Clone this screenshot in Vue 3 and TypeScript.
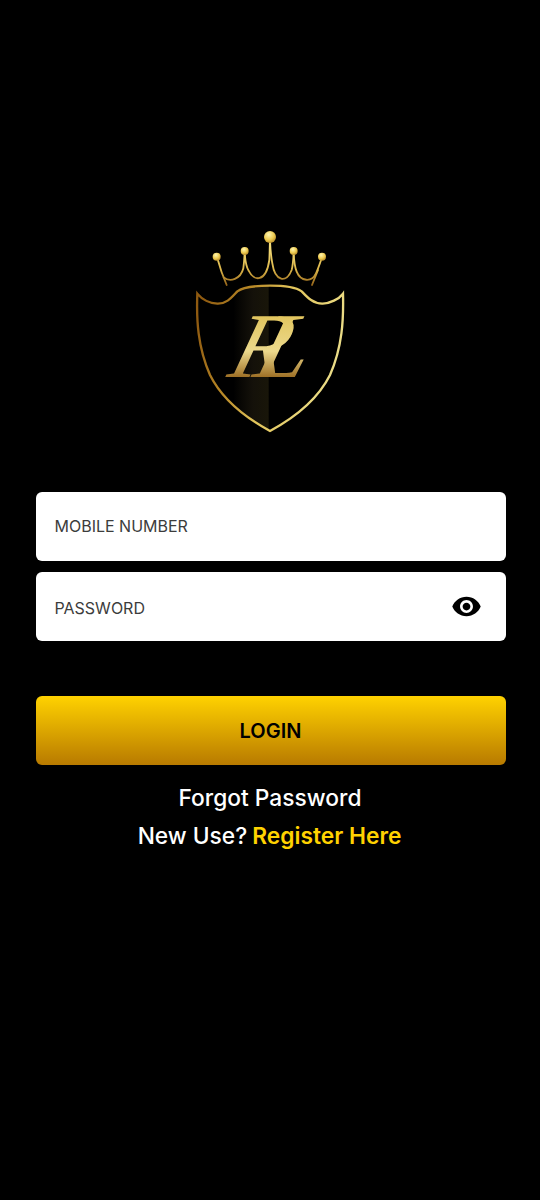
<script setup lang="ts">
import { ref } from "vue";
const mobile = ref<string>("");
const password = ref<string>("");
const balls: { cx: number; cy: number; r: number }[] = [
  { cx: 110, cy: 110, r: 12 },
  { cx: 194, cy: 93, r: 12 },
  { cx: 270, cy: 51, r: 18 },
  { cx: 341, cy: 93, r: 12 },
  { cx: 426, cy: 110, r: 12 },
];
const shield = "M52 221 C66 238 90 250 112 251 C140 252 155 232 172 214 C190 200 235 197 270 197 C305 197 345 200 365 214 C382 232 400 252 428 251 C450 250 476 238 489 221 C491 300 487 380 450 465 C410 545 340 595 270 633 C200 595 130 545 90 465 C53 380 49 300 52 221 Z";
</script>

<template>
  <main class="page">
    <svg class="logo" viewBox="0 0 540 660" role="img" aria-label="RL">
      <defs>
        <linearGradient id="edge" gradientUnits="userSpaceOnUse" x1="50" y1="300" x2="490" y2="420">
          <stop offset="0" stop-color="#8f5a10" />
          <stop offset="0.3" stop-color="#b98a28" />
          <stop offset="0.55" stop-color="#e3c65c" />
          <stop offset="1" stop-color="#ecdf8c" />
        </linearGradient>
        <linearGradient id="panel" gradientUnits="userSpaceOnUse" x1="160" y1="0" x2="266" y2="0">
          <stop offset="0" stop-color="#16130a" stop-opacity="0" />
          <stop offset="0.55" stop-color="#14110a" />
          <stop offset="1" stop-color="#191609" />
        </linearGradient>
        <linearGradient id="crown" gradientUnits="userSpaceOnUse" x1="0" y1="80" x2="0" y2="195">
          <stop offset="0" stop-color="#f3dc7a" />
          <stop offset="0.6" stop-color="#dcb64a" />
          <stop offset="1" stop-color="#96661a" />
        </linearGradient>
        <linearGradient id="letters" gradientUnits="userSpaceOnUse" x1="0" y1="-180" x2="0" y2="5">
          <stop offset="0" stop-color="#e2c660" />
          <stop offset="0.55" stop-color="#ecd98c" />
          <stop offset="1" stop-color="#98681e" />
        </linearGradient>
        <radialGradient id="ball" cx="0.4" cy="0.3" r="0.8">
          <stop offset="0" stop-color="#fff6b0" />
          <stop offset="0.55" stop-color="#ecc94e" />
          <stop offset="1" stop-color="#a87a20" />
        </radialGradient>
        <clipPath id="shieldClip">
          <path :d="shield" />
        </clipPath>
      </defs>

      <rect x="160" y="190" width="106" height="450" fill="url(#panel)" clip-path="url(#shieldClip)" />
      <path :d="shield" fill="none" stroke="url(#edge)" stroke-width="7" stroke-linejoin="miter" />

      <g fill="none" stroke="url(#crown)" stroke-width="5.5" stroke-linecap="round">
        <path d="M113 118 C120 145 130 172 140 195" />
        <path d="M131 172 C150 188 182 178 190 145 C192 130 193 118 194 100" />
        <path d="M194 100 C196 125 198 140 206 152 C222 185 258 188 268 120 C269 100 269 85 270 62" />
        <path d="M270 62 C271 85 272 105 277 130 C285 185 320 190 335 150 C339 135 340 118 341 100" />
        <path d="M341 100 C342 125 344 140 350 155 C362 185 395 188 408 160 C415 145 420 130 424 118" />
        <path d="M396 195 C402 180 408 165 414 150" />
      </g>
      <circle v-for="b in balls" :key="b.cx" :cx="b.cx" :cy="b.cy" :r="b.r" fill="url(#ball)" />

      <text class="monogram" x="0" y="0" font-size="278" letter-spacing="-92" fill="url(#letters)" transform="translate(282 472) skewX(-16) translate(-145 0)">RL</text>
    </svg>

    <form class="form" @submit.prevent>
      <label class="field">
        <input v-model="mobile" class="input input-mobile" type="tel" placeholder="MOBILE NUMBER" />
      </label>
      <label class="field">
        <input v-model="password" class="input input-password" type="password" placeholder="PASSWORD" />
        <svg class="eye" viewBox="0 0 24 24" aria-hidden="true">
          <path d="M12 4.5C7 4.5 2.73 7.61 1 12c1.73 4.39 6 7.5 11 7.5s9.27-3.11 11-7.5c-1.73-4.39-6-7.5-11-7.5zM12 17c-2.76 0-5-2.24-5-5s2.24-5 5-5 5 2.24 5 5-2.24 5-5 5zm0-8c-1.66 0-3 1.34-3 3s1.34 3 3 3 3-1.34 3-3-1.34-3-3-3z" />
        </svg>
      </label>
      <button class="login" type="submit">LOGIN</button>
    </form>

    <p class="forgot">Forgot Password</p>
    <p class="register">New Use? <span class="accent">Register Here</span></p>
  </main>
</template>

<style>
html,
body {
  margin: 0;
  background: #000;
}
</style>

<style scoped>
.page {
  min-height: 1200px;
  box-sizing: border-box;
  padding-top: 220px;
  background: #000;
  display: flex;
  flex-direction: column;
  align-items: center;
  font-family: Inter, "Noto Sans", sans-serif;
}
.logo {
  display: block;
  width: 180px;
  height: 220px;
}
.monogram {
  font-family: "Liberation Serif", serif;
  font-style: italic;
}
.form {
  width: 470px;
  margin: 52px 0 0 1px;
  display: flex;
  flex-direction: column;
  gap: 11px;
}
.field {
  height: 69px;
  box-sizing: border-box;
  padding: 0 24px 0 19px;
  display: flex;
  align-items: center;
  background: #fff;
  border-radius: 6px;
}
.input {
  flex: 1;
  min-width: 0;
  border: 0;
  padding: 0;
  outline: 0;
  background: transparent;
  font: 400 16px Inter, "Noto Sans", sans-serif;
  color: #333;
}
.input-mobile {
  margin-bottom: 2px;
}
.input-password {
  margin-top: 2px;
}
.input::placeholder {
  color: #3c3c3c;
  opacity: 1;
}
.eye {
  width: 31px;
  height: 31px;
  fill: #000;
}
.login {
  height: 69px;
  margin-top: 44px;
  border: 0;
  border-radius: 6px;
  background: linear-gradient(180deg, #ffd200 0%, #b87a00 100%);
  color: #000;
  font: 600 20px Inter, "Noto Sans", sans-serif;
}
.forgot,
.register {
  margin: 0;
  font-size: 22.75px;
  line-height: 38px;
  font-weight: 500;
  color: #fff;
}
.forgot {
  margin-top: 14px;
}
.register {
  margin-left: -1px;
}
.accent {
  color: #ffd200;
  font-weight: 600;
  margin-left: -1px;
}
</style>
